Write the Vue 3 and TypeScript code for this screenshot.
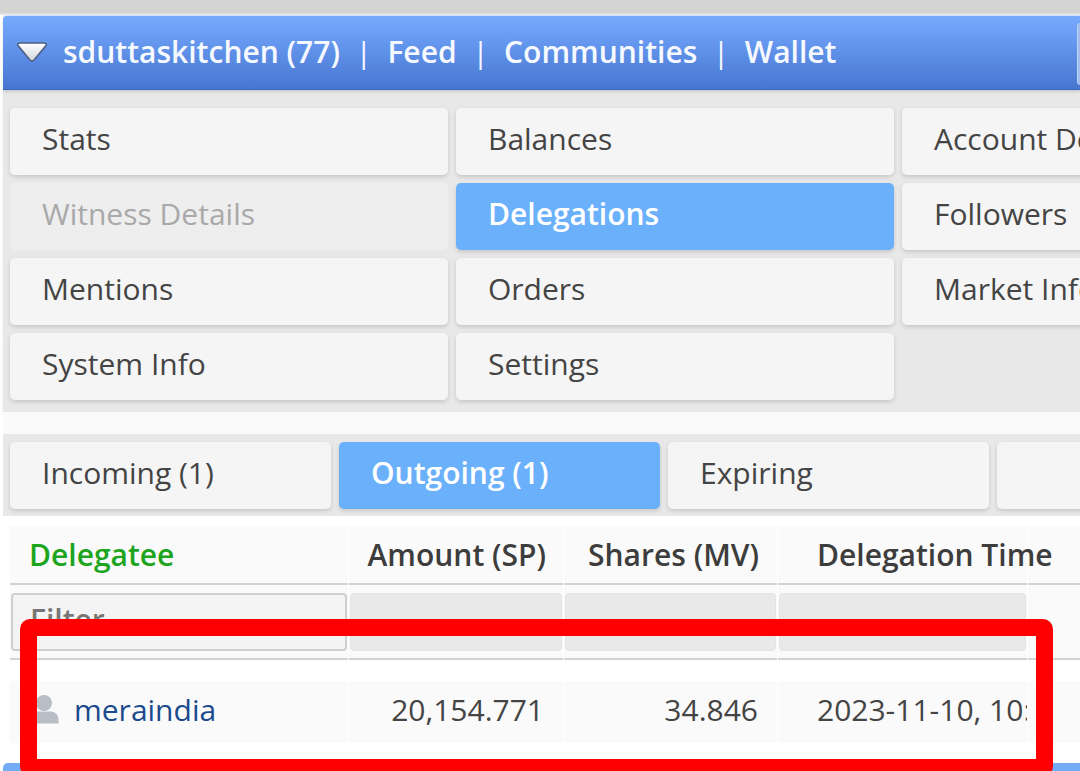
<script setup lang="ts">
const navLinks = ['Feed', 'Communities', 'Wallet']
const menu = [
  { label: 'Stats' }, { label: 'Balances' }, { label: 'Account Details' },
  { label: 'Witness Details', off: true }, { label: 'Delegations', on: true }, { label: 'Followers' },
  { label: 'Mentions' }, { label: 'Orders' }, { label: 'Market Info' },
  { label: 'System Info' }, { label: 'Settings' },
]
const tabs = [
  { label: 'Incoming (1)' }, { label: 'Outgoing (1)', on: true }, { label: 'Expiring' }, { label: '' },
]
const heads = ['Amount (SP)', 'Shares (MV)', 'Delegation Time']
</script>

<template>
  <div class="page">
    <header class="bar">
      <svg class="caret" width="32" height="22" viewBox="0 0 32 22">
        <defs>
          <linearGradient id="caretFill" x1="0" y1="0" x2="0" y2="1">
            <stop offset="0" stop-color="#ffffff"/>
            <stop offset="1" stop-color="#d4d6da"/>
          </linearGradient>
        </defs>
        <path d="M4 2H28Q31 2 30 4.500L18 19Q16 21 14 19L2 4.500Q1 2 4 2Z" fill="url(#caretFill)" stroke="#4c5f82" stroke-width="1.6"/>
      </svg>
      <span>sduttaskitchen (77)</span>
      <template v-for="l in navLinks" :key="l">
        <span class="sep">|</span><span>{{ l }}</span>
      </template>
      <i class="bar-end"></i>
    </header>

    <section class="menu">
      <div v-for="m in menu" :key="m.label" class="btn" :class="{ on: m.on, off: m.off }"><span class="lbl">{{ m.label }}</span></div>
    </section>

    <div class="spacer"></div>

    <section class="tabs">
      <div v-for="(t, i) in tabs" :key="i" class="btn" :class="{ on: t.on }"><span class="lbl">{{ t.label }}</span></div>
    </section>

    <section class="table">
      <div class="cell th green">Delegatee</div>
      <div v-for="(h, i) in heads" :key="h" class="cell th" :class="{ right: i < 2, wide: i === 2, shares: i === 1 }">{{ h }}</div>
      <div class="cell th"></div>

      <div class="cell fc"><div class="filter first">Filter</div></div>
      <div v-for="n in 3" :key="n" class="cell fc"><div class="filter"></div></div>
      <div class="cell fc"></div>

      <div class="gap"></div>

      <div class="cell td">
        <svg class="user" width="30" height="30" viewBox="0 0 30 30">
          <circle cx="15" cy="9" r="8" fill="#b8bec6"/>
          <path d="M1 29.500V25Q1 18.500 8 17.500H22Q29 18.500 29.500 25V29.500Z" fill="#b8bec6"/>
        </svg>
        <span class="link">meraindia</span>
      </div>
      <div class="cell td right">20,154.771</div>
      <div class="cell td right">34.846</div>
      <div class="cell td clip">2023-11-10, 10:</div>
      <div class="cell td"></div>
    </section>

    <div class="foot"></div>
    <div class="mark"></div>
  </div>
</template>

<style>
html, body { margin: 0; background: #fff; }
</style>

<style scoped>
.page {
  position: relative;
  width: 1080px;
  height: 771px;
  overflow: hidden;
  padding-top: 15px;
  box-sizing: border-box;
  background: linear-gradient(#d4d4d4 0, #d4d4d4 13px, #f3f3f3 15px, #fff 16px);
  font-family: "Open Sans", "Noto Sans", sans-serif;
  font-size: 30px;
  color: #444;
}
.bar {
  position: relative;
  z-index: 1;
  display: flex;
  align-items: center;
  height: 75px;
  margin-left: 3px;
  padding: 0 0 2px 13px;
  box-sizing: border-box;
  border-radius: 4px 0 0 0;
  background: linear-gradient(#76aaff, #4776d0);
  border-top: 1px solid #cfe0fa;
  border-bottom: 1px solid #3a66bd;
  box-shadow: 0 2px 3px rgba(0, 0, 0, .12);
  color: #f6f9ff;
  font-weight: 600;
  white-space: nowrap;
}
.caret { margin-right: 15px; flex: none; }
.sep { margin: 0 15.5px; font-weight: 400; }
.bar-end {
  position: absolute;
  left: 1074px;
  top: 7px;
  width: 30px;
  height: 62px;
  border-radius: 4px;
  background: #a0bdf0;
  border-left: 1px solid #c3d5f5;
}
.menu {
  display: grid;
  grid-template-columns: repeat(3, 438px);
  grid-auto-rows: 67px;
  gap: 8px;
  height: 322px;
  box-sizing: border-box;
  margin-left: 3px;
  padding: 18px 7px 0;
  background: #e8e8e8;
  box-shadow: 0 2px 3px rgba(0, 0, 0, .1);
}
.btn {
  display: flex;
  align-items: center;
  padding-left: 32px;
  box-sizing: border-box;
  border-radius: 5px;
  background: #f5f5f5;
  box-shadow: 0 2px 4px rgba(0, 0, 0, .14);
  white-space: nowrap;
  overflow: hidden;
}
.lbl { position: relative; top: -3px; }
.btn.on { background: #6bb0fb; color: #fff; font-weight: 600; }
.btn.off { background: #eeeeee; color: #a9a9a9; box-shadow: none; }
.spacer { height: 22px; margin-left: 3px; background: #fafafa; }
.tabs {
  display: grid;
  grid-template-columns: repeat(4, 321px);
  grid-auto-rows: 67px;
  gap: 8px;
  height: 82px;
  box-sizing: border-box;
  margin-left: 3px;
  padding: 8px 7px 0;
  background: #e8e8e8;
}
.table {
  display: grid;
  grid-template-columns: 338px 214px 213px 249px 60px;
  column-gap: 1px;
  grid-template-rows: 59px 75px 21px 62px;
  margin: 10px 0 0 10px;
  width: 1070px;
}
.cell {
  display: flex;
  align-items: center;
  box-sizing: border-box;
  min-width: 0;
  white-space: nowrap;
}
.th {
  background: #fafafa;
  border-bottom: 2px solid #d2d2d2;
  font-weight: 600;
  color: #3d3d3d;
  padding: 0 17px 0 19px;
}
.th.shares { padding-right: 18px; }
.th.wide { padding-left: 39px; position: relative; }
.green { color: #1ea51e; }
.right { justify-content: flex-end; }
.fc {
  border-bottom: 2px solid #d2d2d2;
  background: #fafafa;
  align-items: flex-start;
  padding-top: 8px;
}
.filter {
  width: 100%;
  height: 58px;
  margin: 0 1px;
  border-radius: 4px;
  background: #e9e9e9;
  border: 1px solid #e4e4e4;
  box-sizing: border-box;
}
.filter.first {
  background: #f4f4f4;
  border: 2px solid #cfcfcf;
  padding: 6px 0 0 17px;
  color: #777;
  font-weight: 600;
  line-height: 38px;
}
.gap { grid-column: 1 / -1; }
.td {
  background: #fafafa;
  padding: 0 20px;
  color: #444;
  padding-bottom: 6px;
}
.td.right { padding-right: 19px; }
.td.clip { padding-left: 39px; padding-right: 0; overflow: hidden; }
.user { margin: 0 15px 0 -1px; flex: none; }
.link { color: #1b4a8e; }
.foot {
  position: absolute;
  left: 3px;
  right: 0;
  top: 763px;
  height: 8px;
  border-radius: 5px 0 0 0;
  background: #72acf8;
}
.mark {
  position: absolute;
  left: 20px;
  top: 619px;
  width: 1033px;
  height: 157px;
  box-sizing: border-box;
  border: 17px solid #fe0000;
  border-radius: 10px;
  pointer-events: none;
}
</style>
